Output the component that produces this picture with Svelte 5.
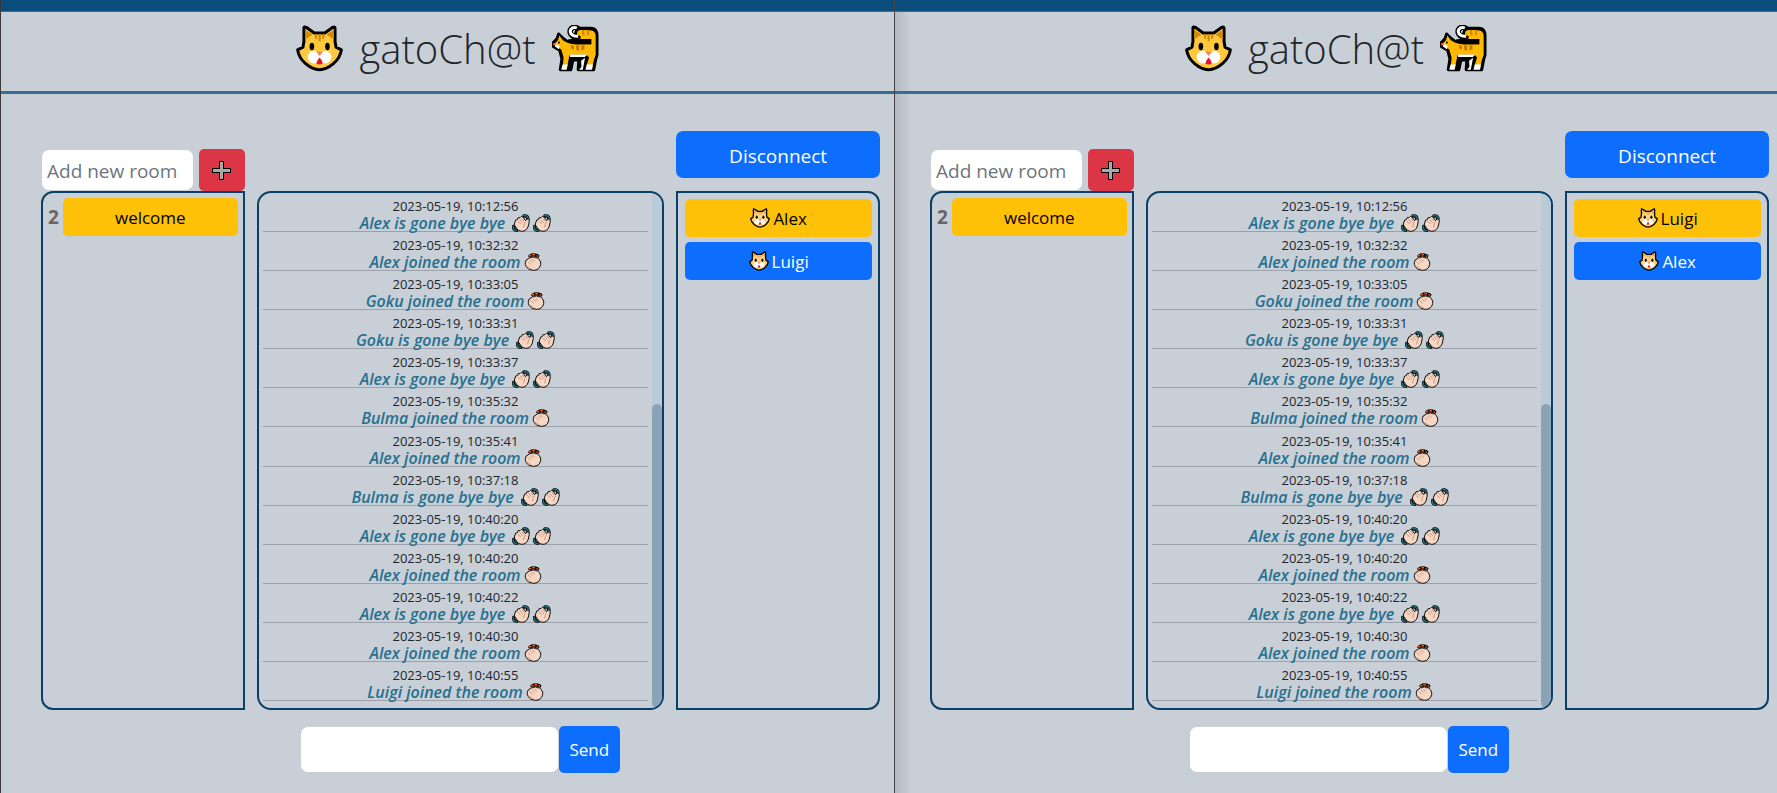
<script>
  const log = [
    ['10:12:56', 'Alex', false],
    ['10:32:32', 'Alex', true],
    ['10:33:05', 'Goku', true],
    ['10:33:31', 'Goku', false],
    ['10:33:37', 'Alex', false],
    ['10:35:32', 'Bulma', true],
    ['10:35:41', 'Alex', true],
    ['10:37:18', 'Bulma', false],
    ['10:40:20', 'Alex', false],
    ['10:40:20', 'Alex', true],
    ['10:40:22', 'Alex', false],
    ['10:40:30', 'Alex', true],
    ['10:40:55', 'Luigi', true]
  ];
  const clients = [
    { id: 'first', users: ['Alex', 'Luigi'] },
    { id: 'second', users: ['Luigi', 'Alex'] }
  ];
</script>

{#snippet catFace(pale)}
  <svg class="cat-face" class:pale viewBox="0 0 142 142" aria-hidden="true">
    <path class="fur" d="M24 8Q25 4 31 7L55 24H87L111 7Q118 4 118 10V50L121 67L137 75Q134 98 113 117Q92 135 71 135Q50 135 29 117Q8 98 5 75L21 67L24 50Z" stroke="#000" stroke-width="9" stroke-linejoin="round" />
    <path class="mark" d="M28 14L50 29L28 44ZM114 14L92 29L114 44Z" />
    <path class="mark" d="M57 28h7v15q-7 0-7-7zM68 28h7v21h-7zM79 28h7v8q0 7-7 7z" />
    <ellipse cx="48" cy="65" rx="7" ry="11" />
    <ellipse cx="95" cy="65" rx="7" ry="11" />
    <circle cx="54" cy="97" r="19" fill="#fff" />
    <circle cx="88" cy="97" r="19" fill="#fff" />
    <path d="M61 80H82L71 94Z" fill="#ff8257" />
    <path d="M71 98Q81 109 80 116Q71 123 62 116Q62 109 71 98Z" fill="#e8132b" />
  </svg>
{/snippet}

{#snippet catWalk()}
  <svg class="cat-walk" viewBox="13 14 142 142" aria-hidden="true">
    <path d="M90 24H130Q149 24 149 46V104L145 118L139 149H92L94 120H76L70 149H38L43 116L36 90L17 79V67L28 56L33 41L47 55L62 66L78 58Z" stroke="#000" stroke-width="9" stroke-linejoin="round" />
    <path d="M20 71L31 60L35 46L46 60Q60 71 80 72H132V56H90V30H128Q145 30 145 49V104L140 118L136 135H118L125 112L117 104H66L60 135H46L48 112L41 88L22 77Z" fill="#ffb900" />
    <path d="M66 103H120L112 111H68ZM45 133H61L57 149H41ZM118 133H137L134 149H114ZM101 122L113 113L106 149H95L102 140Z" fill="#fff" />
    <path d="M62 57H122Q130 59 130 72H83Q70 69 62 60Z" />
    <path d="M90 24C76 14 60 31 72 44Q77 50 91 50" fill="none" stroke="#000" stroke-width="17" stroke-linecap="round" />
    <path d="M88 23C73 17 62 32 73 43Q79 49 92 48" fill="none" stroke="#fff" stroke-width="9" />
    <path d="M90 46Q112 46 128 53L124 30H95Q86 38 90 46Z" fill="#ffb900" />
    <path d="M103 30h7l2 15h-7zM119 30h8l-3 16-6-2z" fill="#d18a0b" />
    <path d="M70 75h9v14l-9-5zM86 75h9v18l-9-5zM102 75h9v12l-9 5z" fill="#c8790b" />
    <path d="M22 71L36 76L34 87L22 79Z" fill="#fff" />
    <circle cx="34" cy="67" r="3" />
    <circle cx="20" cy="72" r="4" fill="#ef4b3f" />
  </svg>
{/snippet}

{#snippet wave()}
  <svg class="hand" viewBox="0 0 54 54" aria-hidden="true">
    <path d="M36 6Q47 4 48 15M5 37Q3 48 15 49" fill="none" stroke="#000" stroke-width="10" stroke-linecap="round" />
    <path d="M36 5Q47 3 49 14M4 37Q2 48 14 50" fill="none" stroke="#23707a" stroke-width="5" stroke-linecap="round" />
    <path d="M8 27L11 18L16 17L18 11L24 11L28 7L33 9L37 15L41 20L44 15Q52 13 52 21L49 36Q44 52 29 52Q20 52 15 44L7 33Z" fill="#f7d7c4" stroke="#111" stroke-width="3" stroke-linejoin="round" />
    <path d="M17 21L26 30M23 16L32 26M30 14L37 22M35 40L37 29L41 23" fill="none" stroke="#9e7561" stroke-width="2" />
  </svg>
{/snippet}

{#snippet clap()}
  <svg class="hand" viewBox="0 0 54 54" aria-hidden="true">
    <path d="M18 9Q28 2 41 9" fill="none" stroke="#000" stroke-width="10" stroke-linecap="round" />
    <path d="M17 8h3M27 5h4M39 9h2" fill="none" stroke="#f05a18" stroke-width="5" stroke-linecap="round" />
    <path d="M4 28Q5 19 12 18Q15 13 22 14Q28 9 34 14Q42 12 46 20Q52 27 50 35Q46 52 28 52Q12 52 7 41Q3 35 4 28Z" fill="#f7d7c4" stroke="#111" stroke-width="3" />
    <path d="M11 25L20 34M18 20L27 29M26 18L32 25M11 39Q15 46 23 48" fill="none" stroke="#a87d67" stroke-width="2" />
  </svg>
{/snippet}

<div class="desktop">
  {#each clients as client (client.id)}
    <section class="window {client.id}">
      <div class="topbar"></div>
      <header>
        {@render catFace(false)}
        <h1>gatoCh@t</h1>
        {@render catWalk()}
      </header>
      <main>
        <form class="new-room">
          <input type="text" placeholder="Add new room" aria-label="Add new room" />
          <button type="button" class="add" aria-label="Add">
            <svg viewBox="0 0 21 21" aria-hidden="true">
              <path d="M8 1h5v7h7v5h-7v7H8v-7H1V8h7z" />
              <path d="M9 2h3v7h7v3h-7v7H9v-7H2V9h7z" fill="#aaa" />
            </svg>
          </button>
        </form>
        <button type="button" class="disconnect">Disconnect</button>

        <div class="panel rooms">
          <span class="count">2</span>
          <button type="button" class="pill yellow">welcome</button>
        </div>

        <div class="panel messages">
          <ul>
            {#each log as [time, name, joined]}
              <li>
                <time>2023-05-19, {time}</time>
                <p class:bye={!joined}>
                  <span>{name} {joined ? 'joined the room' : 'is gone bye bye'}</span>
                  {#if joined}
                    {@render clap()}
                  {:else}
                    {@render wave()}
                    {@render wave()}
                  {/if}
                </p>
              </li>
            {/each}
          </ul>
          <div class="track"><div class="thumb"></div></div>
        </div>

        <div class="panel users">
          {#each client.users as user, i}
            <button type="button" class="pill" class:yellow={i === 0}>
              {@render catFace(true)}{user}
            </button>
          {/each}
        </div>

        <form class="composer">
          <input type="text" aria-label="Message" />
          <button type="button">Send</button>
        </form>
      </main>
    </section>
  {/each}
</div>

<style>
  :global(body) {
    background: #c8cfd6;
    font-family: 'Open Sans', 'Noto Sans', sans-serif;
    color: #212529;
  }
  * {
    box-sizing: border-box;
  }
  .desktop {
    display: grid;
    grid-template-columns: 895fr 882fr;
    min-height: 100vh;
  }
  .window {
    display: flex;
    flex-direction: column;
    background: #c8cfd6;
  }
  .first {
    border-left: 1px solid #3a3a3a;
    border-right: 1px solid #444;
  }
  .second {
    background: linear-gradient(90deg, #b5b9c3, #c8cfd6 16px);
  }
  .topbar {
    height: 12px;
    background: #0b4d7c;
    border-bottom: 1px solid #396f95;
  }
  header {
    display: flex;
    align-items: center;
    justify-content: center;
    gap: 16px;
    height: 82px;
    padding-bottom: 6px;
    border-bottom: 3px solid #366e93;
  }
  h1 {
    margin: 0;
    font-size: 40px;
    font-weight: 300;
    line-height: 56px;
  }
  header svg {
    width: 47px;
    height: 47px;
  }
  .fur {
    fill: #ffc83d;
  }
  .mark {
    fill: #d38b0c;
  }
  .pale .fur {
    fill: #fbd07c;
  }
  .pale .mark {
    fill: #dfa45a;
  }
  main {
    flex: 1;
    display: grid;
    grid-template-columns: minmax(0, 1fr) minmax(0, 2fr) minmax(0, 1fr);
    grid-template-rows: 60px 1fr auto;
    column-gap: 12px;
    padding: 37px 14px 20px 40px;
  }
  .second main {
    padding-left: 35px;
    padding-right: 8px;
  }
  button,
  input {
    border: 0;
    font: inherit;
  }
  button {
    padding: 0;
    color: #fff;
    background: #0d6efd;
    border-radius: 5px;
  }
  input {
    min-width: 0;
    background: #fff;
    border-radius: 7px;
  }
  .new-room {
    grid-column: 1;
    align-self: end;
    display: flex;
    align-items: center;
    gap: 6px;
    padding-left: 1px;
  }
  .new-room input {
    flex: 1;
    height: 40px;
    padding: 2px 5px 0;
    font-size: 19px;
  }
  .new-room input::placeholder {
    color: #6c757d;
    opacity: 1;
  }
  .add {
    display: flex;
    align-items: center;
    justify-content: center;
    width: 46px;
    height: 42px;
    padding: 1px 1px 0 0;
    background: #dc3545;
  }
  .add svg {
    width: 21px;
    height: 21px;
  }
  .disconnect {
    grid-column: 3;
    height: 47px;
    padding-top: 2px;
    font-size: 19px;
    border-radius: 7px;
  }
  .panel {
    border: 2px solid #0a3f66;
    min-width: 0;
  }
  .rooms {
    display: flex;
    align-items: flex-start;
    gap: 4px;
    padding: 5px;
    border-radius: 12px 0 0 12px;
  }
  .count {
    font-size: 19px;
    font-weight: 700;
    line-height: 38px;
    color: #666;
  }
  .pill {
    display: flex;
    align-items: center;
    justify-content: center;
    flex: 1;
    gap: 3px;
    height: 38px;
    font-size: 17px;
  }
  .pill svg {
    width: 20px;
    height: 20px;
  }
  .yellow {
    color: #000;
    background: #ffc107;
  }
  .messages {
    display: flex;
    border-radius: 14px;
    overflow: hidden;
  }
  ul {
    flex: 1;
    display: grid;
    grid-auto-rows: 1fr;
    margin: 0;
    padding: 0 4px 7px;
    list-style: none;
  }
  li {
    display: flex;
    flex-direction: column;
    justify-content: flex-end;
    align-items: center;
    border-bottom: 1px solid #9da1ab;
  }
  time {
    font-size: 13px;
    line-height: 17px;
  }
  p {
    display: flex;
    align-items: center;
    gap: 3px;
    height: 16px;
    margin: 0;
    font-size: 16px;
    font-weight: 600;
    font-style: italic;
    line-height: 16px;
    color: #27708f;
  }
  .bye span {
    margin-right: 4px;
  }
  .hand {
    width: 18px;
    height: 18px;
  }
  .track {
    display: flex;
    flex-direction: column;
    justify-content: flex-end;
    width: 10px;
    background: #b9cad9;
    border-radius: 10px 10px 0 0;
  }
  .thumb {
    height: 59%;
    background: #8ba3b7;
    border-radius: 5px;
  }
  .users {
    display: flex;
    flex-direction: column;
    gap: 5px;
    padding: 6px 6px 6px 7px;
    border-radius: 0 12px 12px 0;
  }
  .users .pill {
    flex: none;
  }
  .composer {
    grid-column: 2;
    display: flex;
    align-items: center;
    justify-content: center;
    gap: 1px;
    padding-top: 16px;
  }
  .composer input {
    width: 63%;
    height: 45px;
    padding: 0 8px;
    font-size: 17px;
  }
  .composer button {
    width: 61px;
    height: 47px;
    font-size: 17px;
  }
</style>
